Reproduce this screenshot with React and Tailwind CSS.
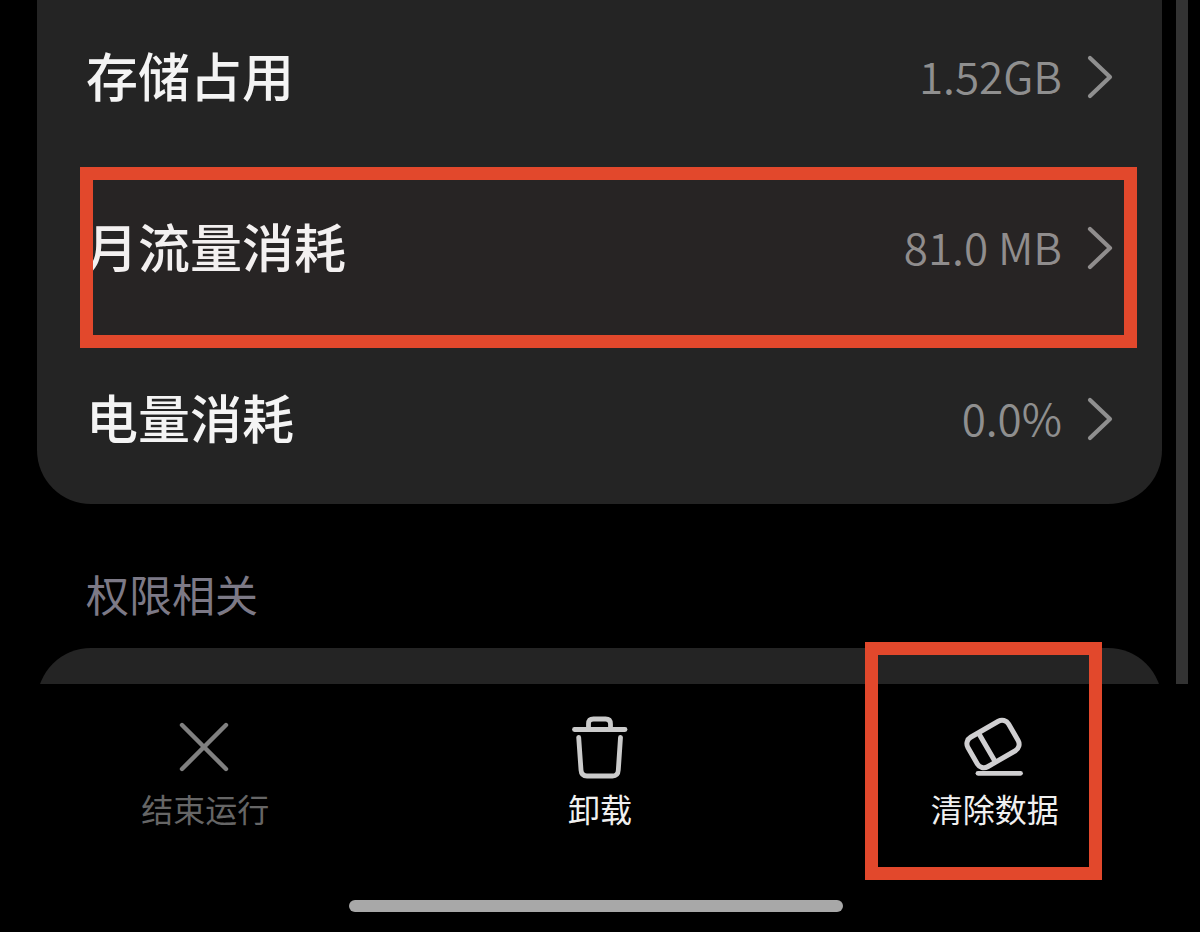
const usage = [
    { name: '存储占用', value: '1.52GB' },
    { name: '月流量消耗', value: '81.0 MB', marked: true },
    { name: '电量消耗', value: '0.0%' },
];

function Marker({ className }) {
    return <span className={`pointer-events-none absolute z-20 border-[13px] border-[#e2482c] ${className}`} />;
}

function Chevron() {
    return (
        <svg className="h-11 w-7 shrink-0" viewBox="0 0 28 44" fill="none" stroke="currentColor" strokeWidth="4.2" strokeLinecap="round" strokeLinejoin="round">
            <path d="M4 3L24 22L4 41" />
        </svg>
    );
}

function CloseIcon() {
    return (
        <svg className="size-16" viewBox="0 0 64 64" fill="none" stroke="currentColor" strokeWidth="4.4" strokeLinecap="round">
            <path d="M9 9L53 53M53 9L9 53" />
        </svg>
    );
}

function TrashIcon() {
    return (
        <svg className="size-16" viewBox="0 0 64 64" fill="none" stroke="currentColor" strokeWidth="4.8" strokeLinecap="round" strokeLinejoin="round">
            <path d="M6.5 13.5H57" />
            <path d="M20.5 13V8Q20.5 3 25.5 3H37.5Q42.5 3 42.5 8V13" />
            <path d="M10.7 21.5L13 54Q13.4 60 19 60H44.5Q50 60 50.3 54L52.5 21.5" />
        </svg>
    );
}

function EraserIcon() {
    return (
        <svg className="size-16" viewBox="0 0 64 64" fill="none" stroke="currentColor" strokeWidth="5" strokeLinecap="round">
            <g transform="rotate(-30 30 28)">
                <rect x="6.5" y="11" width="47" height="34" rx="7.5" />
                <path d="M23 12V44" />
            </g>
            <path d="M15 57.3H57.5" strokeWidth="4.8" />
        </svg>
    );
}

const actions = [
    { name: '结束运行', icon: CloseIcon, iconColor: 'text-[#808080]', color: 'text-[#666666]', disabled: true },
    { name: '卸载', icon: TrashIcon, iconColor: 'text-[#cbcbcb]', color: 'text-[#f0f0f0]' },
    { name: '清除数据', icon: EraserIcon, iconColor: 'text-[#d0cfd1]', color: 'text-[#f0f0f0]', marked: true },
];

export default function App() {
    return (
        <div className="flex h-screen flex-col overflow-hidden bg-black font-['Noto_Sans_CJK_SC',sans-serif]">
            <main className="flex min-h-0 flex-1 items-stretch overflow-hidden pr-3 pl-[37px]">
                <div className="min-w-0 flex-1">
                    <ul className="-mt-[9px] rounded-b-[54px] bg-[#242424]">
                        {usage.map((item) => (
                            <li key={item.name} className="relative">
                                <button type="button" className="flex h-[171px] w-full items-center justify-between pr-12 pl-[49px] text-left">
                                    <span className="pb-1 text-[52px] leading-[60px] font-medium text-[#f4f4f4]">{item.name}</span>
                                    <span className="flex items-center gap-6 text-[#8f8f8f]">
                                        <span className="pb-1 text-[44px] leading-[60px] font-[350]">{item.value}</span>
                                        <Chevron />
                                    </span>
                                </button>
                                {item.marked && <Marker className="top-[5px] right-[25px] -bottom-[15px] left-[43px] bg-[#e2482c]/2" />}
                            </li>
                        ))}
                    </ul>
                    <h2 className="pt-[57px] pb-[23px] pl-[49px] text-[43px] leading-[64px] font-normal text-[#7c7986]">权限相关</h2>
                    <section className="h-40 rounded-t-[54px] bg-[#242424]" />
                </div>
                <div className="ml-[14px] w-3 shrink-0 bg-[#333333]" />
            </main>
            <footer className="relative shrink-0">
                <nav className="grid h-[216px] grid-cols-3 px-2">
                    {actions.map(({ name, icon: Icon, iconColor, color, disabled, marked }) => (
                        <button key={name} type="button" disabled={disabled} className="relative flex flex-col items-center gap-2 pt-8">
                            <span className={iconColor}><Icon /></span>
                            <span className={`text-[32px] leading-[40px] font-normal ${color}`}>{name}</span>
                            {marked && <Marker className="-top-[42px] right-[90px] h-[238px] w-[237px]" />}
                        </button>
                    ))}
                </nav>
                <div className="flex justify-center pr-2 pb-5">
                    <div className="h-3 w-[494px] rounded-full bg-[#a8a8a8]" />
                </div>
            </footer>
        </div>
    );
}
